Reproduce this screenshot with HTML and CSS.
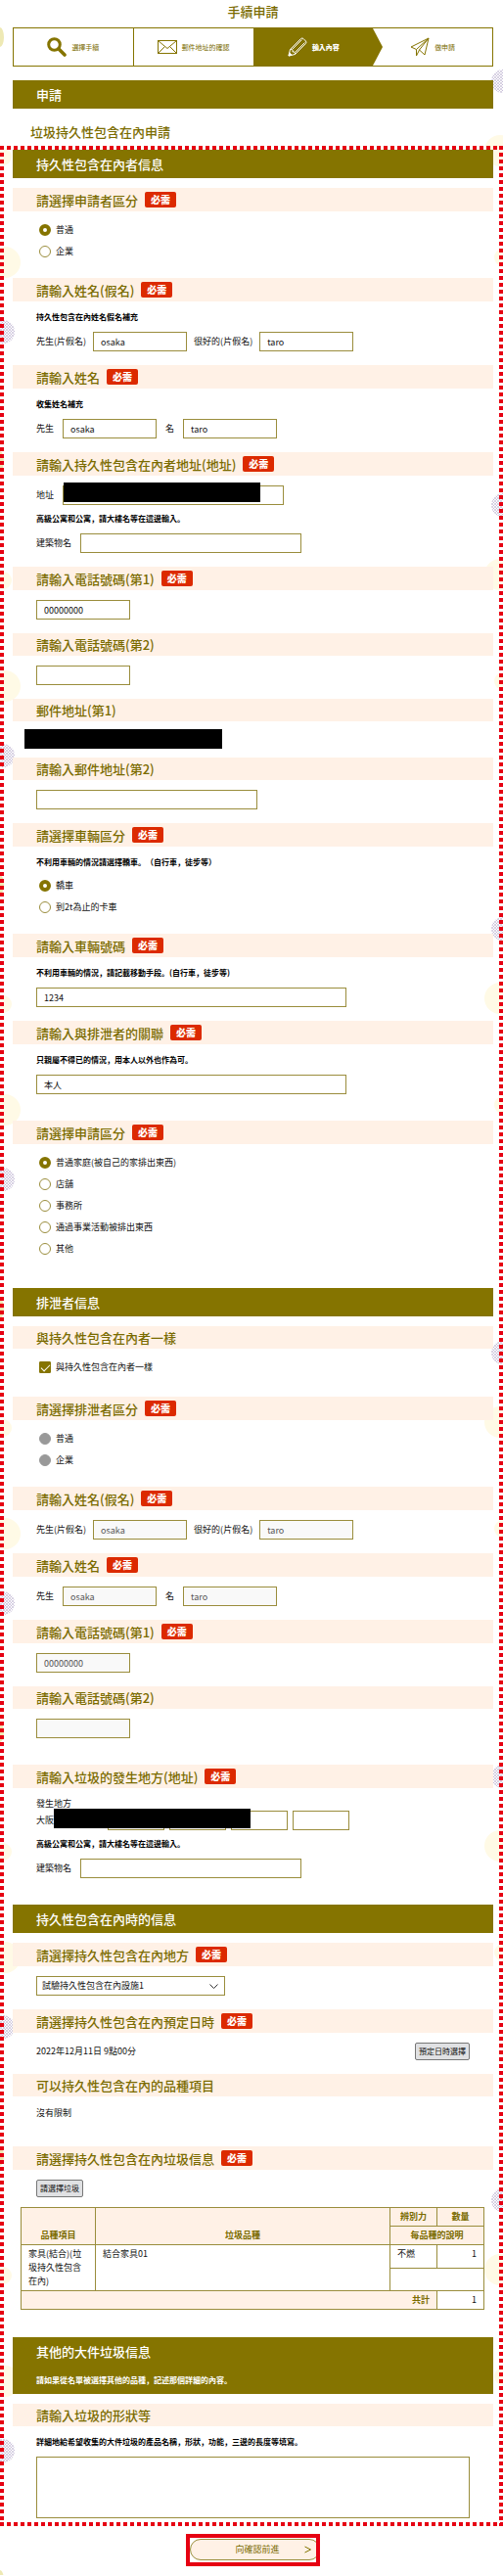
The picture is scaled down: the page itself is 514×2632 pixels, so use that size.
FILE: index.html
```html
<!DOCTYPE html>
<html lang="ja">
<head>
  <meta charset="UTF-8">
  <meta name="viewport" content="width=device-width, initial-scale=1.0">
  <title>手續申請</title>
  <link rel="stylesheet" href="styles.css">
</head>
<body>
  <svg class="backdrop backdrop-left" aria-hidden="true">
    <defs>
      <pattern id="dots" width="3" height="3" patternUnits="userSpaceOnUse">
        <circle cx="1" cy="1" r="0.8" fill="#a597c0"/>
        <circle cx="2.5" cy="2.5" r="0.7" fill="#c6bcd8"/>
      </pattern>
      <pattern id="bg-left" width="24" height="433" patternUnits="userSpaceOnUse">
        <ellipse cx="0" cy="38" rx="4" ry="10" fill="#eee9b4"/>
        <circle cx="3" cy="160" r="9" fill="#fffae6"/>
        <circle cx="5" cy="268" r="16" fill="#fffae6"/>
        <circle cx="3" cy="339" r="12" fill="url(#dots)"/>
      </pattern>
    </defs>
    <rect width="24" height="100%" fill="url(#bg-left)"/>
  </svg>
  <svg class="backdrop backdrop-right" aria-hidden="true">
    <defs>
      <pattern id="bg-right" width="24" height="433" patternUnits="userSpaceOnUse">
        <circle cx="24" cy="83" r="12" fill="url(#dots)"/>
        <circle cx="21" cy="154" r="16" fill="#fffae6"/>
        <circle cx="24" cy="263" r="9" fill="#fffae6"/>
      </pattern>
    </defs>
    <rect width="24" height="100%" fill="url(#bg-right)"/>
  </svg>

  <header class="page-head">
    <h1 class="page-title">手續申請</h1>
    <ol class="steps">
      <li class="step">
        <svg width="20" height="20" viewBox="0 0 20 20" fill="none" stroke="#857400">
          <circle cx="7.5" cy="7.5" r="5.8" stroke-width="3"/>
          <path d="M12 12l6 6" stroke-width="3.6" stroke-linecap="round"/>
        </svg>
        <span>選擇手續</span>
      </li>
      <li class="step">
        <svg width="20" height="14" viewBox="0 0 20 14" fill="none" stroke="#857400">
          <rect x="0.5" y="0.5" width="19" height="13"/>
          <path d="M0.5 0.5l9.5 8 9.5-8M0.5 13.5l7-7M19.5 13.5l-7-7"/>
        </svg>
        <span>郵件地址的確認</span>
      </li>
      <li class="step step-active">
        <svg width="20" height="20" viewBox="0 0 20 20" fill="none" stroke="#fff">
          <path d="M1 19l1.5-6.5 11-11a2 2 0 0 1 2.5 0L18.5 4a2 2 0 0 1 0 2.5l-11 11zM2.5 12.5c2-.5 3 .5 2.5 2.5 2-.5 3 .5 2.5 2.5M4.5 12.5l10-10M7.5 15.5l10-10"/>
          <path d="M1 19l.8-3.2 2.4 2.4z" fill="#fff"/>
        </svg>
        <span>輸入內容</span>
      </li>
      <li class="step">
        <svg width="20" height="20" viewBox="0 0 20 20" fill="none" stroke="#857400" stroke-linejoin="round">
          <path d="M19 1L1 10l5.5 2.5zM19 1L9.5 13l5.5 5zM6.5 12.5V19l3-6"/>
        </svg>
        <span>做申請</span>
      </li>
    </ol>
    <h2 class="bar">申請</h2>
    <p class="form-name">垃圾持久性包含在內申請</p>
  </header>

  <form id="apply">
    <div class="frame">
      <section class="section">
        <h2 class="bar">持久性包含在內者信息</h2>

        <div class="item">
          <h3>請選擇申請者區分 <span class="must">必需</span></h3>
          <div class="item-body">
            <div class="choices">
              <label><input type="radio" name="kind" checked> 普通</label>
              <label><input type="radio" name="kind"> 企業</label>
            </div>
          </div>
        </div>

        <div class="item">
          <h3>請輸入姓名(假名) <span class="must">必需</span></h3>
          <div class="item-body">
            <p class="note">持久性包含在內姓名假名補充</p>
            <div class="row row-kana">
              <label for="kana1">先生(片假名)</label><input class="short" type="text" id="kana1" value="osaka">
              <label for="kana2">很好的(片假名)</label><input class="short" type="text" id="kana2" value="taro">
            </div>
          </div>
        </div>

        <div class="item">
          <h3>請輸入姓名 <span class="must">必需</span></h3>
          <div class="item-body">
            <p class="note">收集姓名補充</p>
            <div class="row">
              <label for="name1">先生</label><input class="short" type="text" id="name1" value="osaka">
              <label for="name2">名</label><input class="short" type="text" id="name2" value="taro">
            </div>
          </div>
        </div>

        <div class="item">
          <h3>請輸入持久性包含在內者地址(地址) <span class="must">必需</span></h3>
          <div class="item-body">
            <div class="row">
              <label for="addr">地址</label>
              <div class="covered">
                <input class="medium" type="text" id="addr">
                <span class="mask mask-addr"></span>
              </div>
            </div>
            <p class="note">高級公寓和公寓，請大樓名等在這邊輸入。</p>
            <div class="row">
              <label for="bldg">建築物名</label><input class="medium" type="text" id="bldg">
            </div>
          </div>
        </div>

        <div class="item">
          <h3><label for="tel1">請輸入電話號碼(第1)</label> <span class="must">必需</span></h3>
          <div class="item-body">
            <div class="row"><input class="short" type="text" id="tel1" value="00000000"></div>
          </div>
        </div>

        <div class="item">
          <h3><label for="tel2">請輸入電話號碼(第2)</label></h3>
          <div class="item-body">
            <div class="row"><input class="short" type="text" id="tel2"></div>
          </div>
        </div>

        <div class="item">
          <h3>郵件地址(第1)</h3>
          <div class="item-body item-body-mail">
            <div class="mail-mask"></div>
          </div>
        </div>

        <div class="item">
          <h3><label for="mail2">請輸入郵件地址(第2)</label></h3>
          <div class="item-body">
            <div class="row"><input class="medium" type="text" id="mail2"></div>
          </div>
        </div>

        <div class="item">
          <h3>請選擇車輛區分 <span class="must">必需</span></h3>
          <div class="item-body">
            <p class="note">不利用車輛的情況請選擇轎車。（自行車，徒步等）</p>
            <div class="choices">
              <label><input type="radio" name="car" checked> 轎車</label>
              <label><input type="radio" name="car"> 到2t為止的卡車</label>
            </div>
          </div>
        </div>

        <div class="item">
          <h3><label for="plate">請輸入車輛號碼</label> <span class="must">必需</span></h3>
          <div class="item-body">
            <p class="note">不利用車輛的情況，請記載移動手段。(自行車，徒步等)</p>
            <div class="row"><input class="long" type="text" id="plate" value="1234"></div>
          </div>
        </div>

        <div class="item spaced">
          <h3><label for="relation">請輸入與排泄者的關聯</label> <span class="must">必需</span></h3>
          <div class="item-body">
            <p class="note">只親屬不得已的情況，用本人以外也作為可。</p>
            <div class="row"><input class="long" type="text" id="relation" value="本人"></div>
          </div>
        </div>

        <div class="item spaced">
          <h3>請選擇申請區分 <span class="must">必需</span></h3>
          <div class="item-body">
            <div class="choices">
              <label><input type="radio" name="type" checked> 普通家庭(被自己的家排出東西)</label>
              <label><input type="radio" name="type"> 店舖</label>
              <label><input type="radio" name="type"> 事務所</label>
              <label><input type="radio" name="type"> 通過事業活動被排出東西</label>
              <label><input type="radio" name="type"> 其他</label>
            </div>
          </div>
        </div>
      </section>

      <section class="section">
        <h2 class="bar">排泄者信息</h2>

        <div class="item">
          <h3>與持久性包含在內者一樣</h3>
          <div class="item-body">
            <div class="choices choices-check">
              <label><input type="checkbox" checked> 與持久性包含在內者一樣</label>
            </div>
          </div>
        </div>

        <div class="item">
          <h3>請選擇排泄者區分 <span class="must">必需</span></h3>
          <div class="item-body">
            <div class="choices">
              <label><input type="radio" name="kind2" disabled> 普通</label>
              <label><input type="radio" name="kind2" disabled> 企業</label>
            </div>
          </div>
        </div>

        <div class="item">
          <h3>請輸入姓名(假名) <span class="must">必需</span></h3>
          <div class="item-body">
            <div class="row row-kana">
              <label for="kana3">先生(片假名)</label><input class="short" type="text" id="kana3" value="osaka" disabled>
              <label for="kana4">很好的(片假名)</label><input class="short" type="text" id="kana4" value="taro" disabled>
            </div>
          </div>
        </div>

        <div class="item">
          <h3>請輸入姓名 <span class="must">必需</span></h3>
          <div class="item-body">
            <div class="row">
              <label for="name3">先生</label><input class="short" type="text" id="name3" value="osaka" disabled>
              <label for="name4">名</label><input class="short" type="text" id="name4" value="taro" disabled>
            </div>
          </div>
        </div>

        <div class="item">
          <h3><label for="tel3">請輸入電話號碼(第1)</label> <span class="must">必需</span></h3>
          <div class="item-body">
            <div class="row"><input class="short" type="text" id="tel3" value="00000000" disabled></div>
          </div>
        </div>

        <div class="item spaced">
          <h3><label for="tel4">請輸入電話號碼(第2)</label></h3>
          <div class="item-body">
            <div class="row"><input class="short" type="text" id="tel4" disabled></div>
          </div>
        </div>

        <div class="item spaced">
          <h3>請輸入垃圾的發生地方(地址) <span class="must">必需</span></h3>
          <div class="item-body">
            <p class="place">發生地方</p>
            <div class="row row-place covered">
              <label for="ward">大阪</label>
              <input type="text" id="ward">
              <input type="text" aria-label="町">
              <input type="text" aria-label="番">
              <input type="text" aria-label="號">
              <span class="mask mask-place"></span>
            </div>
            <p class="note">高級公寓和公寓，請大樓名等在這邊輸入。</p>
            <div class="row">
              <label for="bldg2">建築物名</label><input class="medium" type="text" id="bldg2">
            </div>
          </div>
        </div>
      </section>

      <section class="section">
        <h2 class="bar">持久性包含在內時的信息</h2>

        <div class="item">
          <h3><label for="site">請選擇持久性包含在內地方</label> <span class="must">必需</span></h3>
          <div class="item-body">
            <div class="row">
              <div class="select">
                <select id="site"><option>試驗持久性包含在內設施1</option></select>
                <svg width="9" height="6" viewBox="0 0 9 6" fill="none" stroke="#333"><path d="M0.5 0.5l4 4 4-4"/></svg>
              </div>
            </div>
          </div>
        </div>

        <div class="item">
          <h3>請選擇持久性包含在內預定日時 <span class="must">必需</span></h3>
          <div class="item-body">
            <div class="row row-date">
              <span>2022年12月11日 9點00分</span>
              <button class="mini" type="button">預定日時選擇</button>
            </div>
          </div>
        </div>

        <div class="item spaced">
          <h3>可以持久性包含在內的品種項目</h3>
          <div class="item-body">
            <p class="value">沒有限制</p>
          </div>
        </div>

        <div class="item">
          <h3>請選擇持久性包含在內垃圾信息 <span class="must">必需</span></h3>
          <div class="item-body item-body-trash">
            <div class="row"><button class="mini" type="button">請選擇垃圾</button></div>
          </div>
          <table class="trash">
            <thead>
              <tr>
                <th class="col-cat" rowspan="2">品種項目</th>
                <th rowspan="2">垃圾品種</th>
                <th class="col-num">辨別力</th>
                <th class="col-num">數量</th>
              </tr>
              <tr><th colspan="2">每品種的說明</th></tr>
            </thead>
            <tbody>
              <tr>
                <td rowspan="2">家具(結合)(垃圾持久性包含在內)</td>
                <td rowspan="2">結合家具01</td>
                <td>不燃</td>
                <td class="num">1</td>
              </tr>
              <tr><td colspan="2"></td></tr>
            </tbody>
            <tfoot>
              <tr>
                <th class="num" colspan="3">共計</th>
                <td class="num">1</td>
              </tr>
            </tfoot>
          </table>
        </div>
      </section>

      <section class="section">
        <div class="bar bar-tall">
          <h2>其他的大件垃圾信息</h2>
          <p>請如果從名單被選擇其他的品種，記述那個詳細的內容。</p>
        </div>

        <div class="item">
          <h3><label for="shape">請輸入垃圾的形狀等</label></h3>
          <div class="item-body item-body-last">
            <p class="note">詳細地給希望收集的大件垃圾的產品名稱，形狀，功能，三邊的長度等填寫。</p>
            <div class="row"><textarea id="shape"></textarea></div>
          </div>
        </div>
      </section>
    </div>

    <div class="actions">
      <div class="highlight">
        <button class="next" type="submit"><span>向確認前進</span><svg width="7" height="8" viewBox="0 0 7 8" fill="none" stroke="#857400"><path d="M0.5 1l6 3-6 3"/></svg></button>
      </div>
    </div>
  </form>
</body>
</html>
```

FILE: styles.css
```css
* {
  box-sizing: border-box;
}

body {
  position: relative;
  margin: 0;
  padding-bottom: 9px;
  background-color: #fff;
  color: #111;
  font-family: 'Noto Sans CJK JP', sans-serif;
  font-size: 9px;
  line-height: 14px;
}

h1, h2, h3, p, ol {
  margin: 0;
  padding: 0;
}

input, select, textarea, button {
  margin: 0;
  font: inherit;
  color: inherit;
}

/* circles along both edges */
.backdrop {
  position: absolute;
  top: 0;
  z-index: -1;
  width: 24px;
  height: 100%;
}

.backdrop-left {
  left: 0;
}

.backdrop-right {
  right: 0;
}

/* header */
.page-head {
  padding: 2px 10px 0 13px;
}

.page-title {
  height: 26px;
  color: #7a6b00;
  font-size: 13px;
  font-weight: 500;
  line-height: 20px;
  text-align: center;
}

.steps {
  display: flex;
  height: 40px;
  margin-bottom: 14px;
  border: 1px solid #857400;
  list-style: none;
}

.step {
  flex: 1;
  display: flex;
  align-items: center;
  justify-content: center;
  gap: 5px;
  color: #7a6b00;
  font-size: 7px;
}

.step + .step {
  border-left: 1px solid #857400;
}

.step-active {
  position: relative;
  background-color: #857400;
  color: #fff;
  font-weight: 900;
}

.step-active::after {
  content: "";
  position: absolute;
  top: 0;
  left: 100%;
  border-top: 19px solid transparent;
  border-bottom: 19px solid transparent;
  border-left: 10px solid #857400;
}

.step-active + .step {
  border-left: 0;
}

.bar {
  padding: 0 24px;
  background-color: #857400;
  color: #fff;
  font-size: 13px;
  font-weight: 500;
  line-height: 29px;
}

.bar-tall {
  height: 58px;
}

.bar-tall h2 {
  font-size: 13px;
  font-weight: 500;
  line-height: 29px;
}

.bar-tall p {
  font-size: 8px;
  font-weight: 700;
}

.form-name {
  padding: 14px 18px 4px;
  color: #7a6b00;
  font-size: 13px;
  font-weight: 500;
  line-height: 20px;
}

/* dashed red frame round the form */
.frame {
  padding: 4px 10px 4px 13px;
  background:
    linear-gradient(90deg, #e60012 4px, transparent 4px) 0 0 / 7px 4px repeat-x,
    linear-gradient(90deg, #e60012 4px, transparent 4px) 0 100% / 7px 4px repeat-x,
    linear-gradient(#e60012 4px, transparent 4px) 0 0 / 4px 7px repeat-y,
    linear-gradient(#e60012 4px, transparent 4px) 100% 0 / 4px 7px repeat-y;
}

.section .bar {
  margin-bottom: 10px;
}

.item h3 {
  display: flex;
  align-items: center;
  gap: 7px;
  min-height: 23px;
  padding: 4px 24px;
  background-color: #fff1e6;
  color: #7a6b00;
  font-size: 13px;
  font-weight: 500;
  line-height: 15px;
}

.must {
  padding: 0 6px;
  border-radius: 2px;
  background-color: #dc2a00;
  color: #fff;
  font-size: 10px;
  font-weight: 900;
  line-height: 16px;
}

.item-body {
  padding: 8px 24px 14px;
}

.spaced {
  padding-bottom: 13px;
}

.note {
  margin: 2px 0 7px;
  color: #000;
  font-size: 8px;
  font-weight: 700;
  line-height: 12px;
}

.row + .note {
  margin-top: 8px;
}

.row {
  display: flex;
  align-items: center;
  gap: 9px;
  margin-top: 2px;
}

.note + .row {
  margin-top: 9px;
}

.row-kana {
  gap: 7px;
}

input[type="text"], select, textarea {
  height: 20px;
  padding: 1px 7px 0;
  border: 1px solid #9a8d3c;
  border-radius: 0;
  background-color: #fff;
}

input[type="text"]:disabled {
  background-color: #f9f9f9;
  color: #555;
}

.short {
  width: 96px;
}

.medium {
  width: 226px;
}

.long {
  width: 317px;
}

/* radios and tick boxes */
.choices {
  display: flex;
  flex-direction: column;
  padding-left: 3px;
  margin-bottom: 2px;
}

.choices-check {
  margin-bottom: 5px;
}

.choices label {
  display: flex;
  align-items: center;
  gap: 5px;
  height: 22px;
}

input[type="radio"], input[type="checkbox"] {
  appearance: none;
  width: 12px;
  height: 12px;
  border: 1px solid #9a8d3c;
  background-color: #fff;
}

input[type="radio"] {
  border-radius: 50%;
}

input[type="radio"]:checked {
  border: 4px solid #857400;
}

input[type="radio"]:disabled {
  border-color: #999;
  background-color: #999;
}

input[type="checkbox"] {
  position: relative;
  border-radius: 1px;
}

input[type="checkbox"]:checked {
  border-color: #857400;
  background-color: #857400;
}

input[type="checkbox"]:checked::after {
  content: "";
  position: absolute;
  top: 2px;
  left: 1px;
  width: 8px;
  height: 4px;
  border-left: 1px solid #fff;
  border-bottom: 1px solid #fff;
  transform: rotate(-45deg);
}

/* blacked-out values */
.covered {
  position: relative;
}

.mask {
  position: absolute;
  width: 201px;
  height: 20px;
  background-color: #000;
}

.mask-addr {
  top: -3px;
  left: 1px;
}

.mask-place {
  top: -2px;
  left: 18px;
}

.item-body-mail {
  padding: 8px 12px 9px;
}

.mail-mask {
  width: 202px;
  height: 20px;
  background-color: #000;
}

.place {
  padding-top: 1px;
}

.row-place {
  gap: 5px;
  margin-top: 0;
}

.row-place label {
  width: 68px;
}

.row-place input {
  width: 58px;
}

.select {
  position: relative;
}

.select select {
  appearance: none;
  width: 193px;
  padding: 0 20px 0 5px;
}

.select svg {
  position: absolute;
  top: 8px;
  right: 7px;
}

.row-date {
  justify-content: space-between;
}

.mini {
  height: 18px;
  padding: 0 3px;
  border: 1px solid #777;
  border-radius: 2px;
  background-color: #e0e1e3;
  font-size: 8px;
  line-height: 12px;
}

.value {
  padding-top: 2px;
}

.item-body-trash {
  padding-bottom: 10px;
}

/* table */
.trash {
  width: calc(100% - 17px);
  margin: 0 8px 28px;
  border-collapse: collapse;
  table-layout: fixed;
}

.trash th, .trash td {
  height: 19px;
  padding: 2px 7px;
  border: 1px solid #9a8d3c;
}

.trash th {
  background-color: #fff1e6;
  color: #7a6b00;
  font-weight: 700;
  vertical-align: bottom;
}

.trash tbody td {
  height: 23px;
  vertical-align: top;
}

.trash .col-cat {
  width: 76px;
}

.trash .col-num {
  width: 48px;
}

.trash .num {
  text-align: right;
}

.item-body-last {
  padding-bottom: 4px;
}

textarea {
  display: block;
  flex: 1;
  height: 63px;
  resize: none;
}

/* bottom button */
.actions {
  display: flex;
  justify-content: center;
  padding: 8px 10px 0 13px;
}

.highlight {
  width: 137px;
  padding: 1px 0 2px;
  border: 4px solid #e60012;
  overflow: hidden;
}

.next {
  display: flex;
  align-items: center;
  width: 133px;
  height: 22px;
  padding: 0 8px 0 20px;
  border: 1px solid #9a8d3c;
  border-radius: 11px;
  background-color: #fff1e6;
  color: #7a6b00;
}

.next span {
  flex: 1;
  text-align: center;
}

.mini, .next {
  cursor: pointer;
}
```
